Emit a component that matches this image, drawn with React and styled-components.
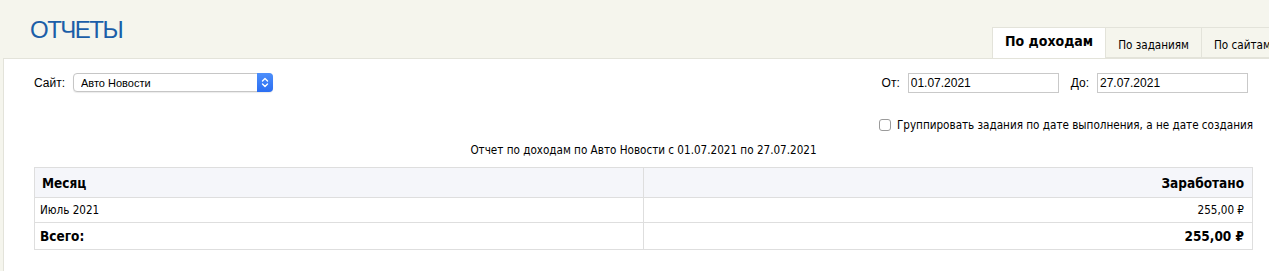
import React, { useState } from 'react';
import styled, { createGlobalStyle } from 'styled-components';

const GlobalStyle = createGlobalStyle`
  html, body {
    margin: 0;
    padding: 0;
    background-color: #f5f5ed;
    overflow: hidden;
  }
  body {
    font-family: 'DejaVu Sans Condensed', 'DejaVu Sans', sans-serif;
    color: #000;
  }
`;

const Header = styled.header`
  display: grid;
  grid-template-columns: 992px 1fr;
  height: 58px;
`;

const Title = styled.h1`
  margin: 0;
  padding: 17px 0 0 30px;
  font-family: 'Liberation Sans', Arial, sans-serif;
  font-weight: normal;
  font-size: 24px;
  line-height: 26px;
  letter-spacing: -1.5px;
  color: #1b5ea8;
`;

const Tabs = styled.nav`
  display: flex;
  align-self: end;
  overflow: hidden;
  white-space: nowrap;
`;

const Tab = styled.button`
  flex: none;
  height: 31px;
  margin: 0 0 ${(p) => (p.$active ? '-1px' : '0')};
  padding: ${(p) => (p.$active ? '0 12px 5px' : '4px 12px 0')};
  border: 1px solid #e3e3da;
  border-bottom: ${(p) => (p.$active ? 'none' : '1px solid #e3e3da')};
  border-left-width: ${(p) => (p.$first ? '1px' : '0')};
  background-color: ${(p) => (p.$active ? '#fff' : '#f5f5ed')};
  font-family: inherit;
  font-size: ${(p) => (p.$active ? '14px' : '11.6px')};
  font-weight: ${(p) => (p.$active ? 'bold' : 'normal')};
  color: #000;
  cursor: pointer;
`;

const Panel = styled.main`
  margin-left: 3px;
  padding: 13px 16px 21px 30px;
  background-color: #fff;
  border-top: 1px solid #e3e3da;
  border-left: 1px solid #e3e3da;
`;

const FilterRow = styled.div`
  display: flex;
  align-items: center;
  justify-content: space-between;
  height: 21px;
  padding-right: 5px;
  font-family: 'Liberation Sans', Arial, sans-serif;
  font-size: 12px;
`;

const Field = styled.label`
  display: flex;
  align-items: center;
  gap: ${(p) => p.$gap || 8}px;
  margin-left: ${(p) => p.$offset || 0}px;
`;

const Dates = styled.div`
  display: flex;
  align-items: center;
`;

const SelectBox = styled.div`
  position: relative;
  width: 200px;
  height: 19px;
`;

const Select = styled.select`
  appearance: none;
  box-sizing: border-box;
  width: 100%;
  height: 100%;
  padding: 0 20px 0 7px;
  border: 1px solid #c6c6c6;
  border-radius: 4px;
  background: #fff;
  font-family: 'Liberation Sans', Arial, sans-serif;
  font-size: 11px;
  color: #000;
  box-shadow: 0 1px 1px rgba(0, 0, 0, 0.08);
`;

const Stepper = styled.span`
  position: absolute;
  top: 0;
  right: 0;
  width: 16px;
  height: 19px;
  display: flex;
  align-items: center;
  justify-content: center;
  border-radius: 0 4px 4px 0;
  background: linear-gradient(#4d8ffb, #2b6ef2);
  pointer-events: none;
`;

const DateInput = styled.input`
  box-sizing: border-box;
  width: 151px;
  height: 20px;
  padding: 0 2px;
  border: 1px solid #c9c9c9;
  font-family: 'Liberation Sans', Arial, sans-serif;
  font-size: 12px;
  color: #000;
  outline: none;
`;

const OptionRow = styled.div`
  display: flex;
  justify-content: flex-end;
  margin-top: 25px;
`;

const CheckLabel = styled.label`
  display: flex;
  align-items: center;
  gap: 6px;
  font-size: 11.6px;
  cursor: pointer;
`;

const Checkbox = styled.input`
  appearance: none;
  width: 12px;
  height: 12px;
  margin: 0;
  border: 1px solid #9b9b9b;
  border-radius: 3px;
  background: #fff;

  &:checked {
    background: #2b6ef2;
    border-color: #2b6ef2;
  }
`;

const Caption = styled.p`
  margin: 11px 0 9px;
  text-align: center;
  font-size: 11.6px;
  line-height: 15px;
`;

const Table = styled.table`
  width: 100%;
  border-collapse: collapse;
  table-layout: fixed;
`;

const Cell = styled.td`
  height: ${(p) => p.$h}px;
  padding: 0 8px 0 5px;
  border: 1px solid #dedede;
  text-align: ${(p) => (p.$right ? 'right' : 'left')};
  font-size: ${(p) => (p.$bold ? '13.5px' : '11.6px')};
  font-weight: ${(p) => (p.$bold ? 'bold' : 'normal')};
  background-color: ${(p) => (p.$head ? '#f5f6fa' : '#fff')};
`;

const HeadCell = styled(Cell).attrs({ as: 'th' })`
  padding-left: 7px;
`;

const tabs = ['По доходам', 'По заданиям', 'По сайтам'];

const App = () => {
  const [active, setActive] = useState(0);
  const [byDone, setByDone] = useState(false);

  return (
    <>
      <GlobalStyle />
      <Header>
        <Title>ОТЧЕТЫ</Title>
        <Tabs>
          {tabs.map((t, i) => (
            <Tab key={t} $active={i === active} $first={i === 0} onClick={() => setActive(i)}>
              {t}
            </Tab>
          ))}
        </Tabs>
      </Header>
      <Panel>
        <FilterRow>
          <Field $gap={8}>
            Сайт:
            <SelectBox>
              <Select defaultValue="auto">
                <option value="auto">Авто Новости</option>
              </Select>
              <Stepper>
                <svg width="8" height="11" viewBox="0 0 8 11" fill="none" stroke="#fff" strokeWidth="1.4" strokeLinecap="round" strokeLinejoin="round">
                  <path d="M1.5 4 L4 1.5 L6.5 4" />
                  <path d="M1.5 7 L4 9.5 L6.5 7" />
                </svg>
              </Stepper>
            </SelectBox>
          </Field>
          <Dates>
            <Field $gap={8}>
              От:
              <DateInput defaultValue="01.07.2021" />
            </Field>
            <Field $gap={8} $offset={12}>
              До:
              <DateInput defaultValue="27.07.2021" />
            </Field>
          </Dates>
        </FilterRow>
        <OptionRow>
          <CheckLabel>
            <Checkbox type="checkbox" checked={byDone} onChange={(e) => setByDone(e.target.checked)} />
            Группировать задания по дате выполнения, а не дате создания
          </CheckLabel>
        </OptionRow>
        <Caption>Отчет по доходам по Авто Новости с 01.07.2021 по 27.07.2021</Caption>
        <Table>
          <thead>
            <tr>
              <HeadCell $h={29} $head $bold>Месяц</HeadCell>
              <HeadCell $h={29} $head $bold $right>Заработано</HeadCell>
            </tr>
          </thead>
          <tbody>
            <tr>
              <Cell $h={24}>Июль 2021</Cell>
              <Cell $h={24} $right>255,00 ₽</Cell>
            </tr>
            <tr>
              <Cell $h={26} $bold>Всего:</Cell>
              <Cell $h={26} $bold $right>255,00 ₽</Cell>
            </tr>
          </tbody>
        </Table>
      </Panel>
    </>
  );
};

export default App;
